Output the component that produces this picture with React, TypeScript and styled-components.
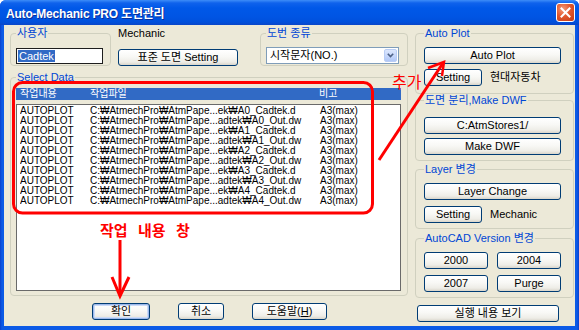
import React from "react";
import styled, { createGlobalStyle, css } from "styled-components";

const FONT = `"Liberation Sans", "Noto Sans CJK KR", Arial, sans-serif`;

const GlobalStyle = createGlobalStyle`
  html, body { margin: 0; padding: 0; background: #ffffff; }
  body { font-family: ${FONT}; }
  *, *::before, *::after { box-sizing: border-box; }
`;

const Window = styled.div`
  position: relative;
  width: 579px;
  height: 330px;
  display: flex;
  flex-direction: column;
  background: linear-gradient(90deg, #0A3FCC 0px, #0B5AE6 2px, #0B5AE6 calc(100% - 2px), #0A3FCC 100%);
  border-radius: 6px 6px 0 0;
  overflow: hidden;
  font-family: ${FONT};
`;

const TitleBar = styled.div`
  height: 25px;
  flex: none;
  display: flex;
  align-items: center;
  justify-content: space-between;
  padding: 0 4px 0 6px;
  background: linear-gradient(
    180deg,
    #3D8DF8 0px,
    #0F62EC 3px,
    #0058E8 8px,
    #0055E4 16px,
    #0050DC 22px,
    #0A46C8 25px
  );
`;

const Title = styled.span`
  color: #ffffff;
  font-weight: bold;
  font-size: 12px;
  letter-spacing: -0.2px;
  text-shadow: 1px 1px 0 #0A2E9A;
  white-space: nowrap;
`;

const CloseButton = styled.div`
  width: 19px;
  height: 19px;
  border: 1px solid #ffffff;
  border-radius: 3px;
  background: radial-gradient(circle at 35% 30%, #F29A7A 0%, #E2582E 45%, #C43A12 100%);
  display: flex;
  align-items: center;
  justify-content: center;
`;

const Client = styled.div`
  flex: 1;
  margin: 0 4px 4px 4px;
  background: #ECE9D8;
  display: grid;
  grid-template-columns: 398px 159px;
  column-gap: 7px;
  padding: 2px 1px 0 6px;
`;

const Column = styled.div`
  display: flex;
  flex-direction: column;
  min-width: 0;
`;

const TopRow = styled.div`
  display: flex;
  height: 39px;
`;

const Group = styled.fieldset<{
  $w?: number;
  $h: number;
  $pt: number;
  $pl: number;
  $pr?: number;
  $mt?: number;
}>`
  margin: ${(p) => p.$mt ?? 0}px 0 0 0;
  width: ${(p) => (p.$w ? `${p.$w}px` : "auto")};
  height: ${(p) => p.$h}px;
  min-width: 0;
  padding: ${(p) => p.$pt}px ${(p) => p.$pr ?? 0}px 0 ${(p) => p.$pl}px;
  border: 1px solid #D0D0BF;
  border-radius: 4px;
  flex: none;
`;

const Legend = styled.legend`
  padding: 0 1px;
  font-size: 11px;
  line-height: 12px;
  color: #0046D5;
  white-space: nowrap;
`;

const TextBox = styled.div`
  width: 87px;
  height: 16px;
  border: 1px solid #1E1E1E;
  background: #ffffff;
  padding: 0 1px;
  display: flex;
  align-items: center;
`;

const SelectedText = styled.span`
  background: #316AC5;
  color: #ffffff;
  font-size: 11px;
  line-height: 12px;
  padding: 0 1px;
`;

const MechBlock = styled.div`
  width: 120px;
  margin: 0 22px 0 7px;
  display: flex;
  flex-direction: column;
  gap: 9px;
  flex: none;
`;

const PlainLabel = styled.span`
  font-size: 11px;
  line-height: 13px;
  color: #000000;
  white-space: nowrap;
`;

const Btn = styled.button<{ $w?: number; $default?: boolean }>`
  width: ${(p) => (p.$w ? `${p.$w}px` : "100%")};
  height: 17px;
  flex: none;
  padding: 0;
  margin: 0;
  border: 1px solid #003C74;
  border-radius: 3px;
  background: linear-gradient(180deg, #FFFFFF 0%, #F8F8F5 45%, #EEEDE7 80%, #D9D5CA 100%);
  font-family: ${FONT};
  font-size: 11px;
  line-height: 15px;
  color: #000000;
  white-space: nowrap;
  ${(p) =>
    p.$default &&
    css`
      box-shadow: inset 0 0 0 1px #9DB9EB, inset 0 0 0 2px #CBDBF7;
    `}
`;

const SelectBox = styled.div`
  width: 133px;
  height: 17px;
  border: 1px solid #7F9DB9;
  background: #ffffff;
  display: flex;
  align-items: center;
  justify-content: space-between;
  padding: 0 1px 0 3px;
  font-size: 11px;
  line-height: 13px;
`;

const DropButton = styled.span`
  width: 13px;
  height: 13px;
  border-radius: 2px;
  border: 1px solid #B9CDF5;
  background: linear-gradient(180deg, #DCE7FD 0%, #C3D5FB 60%, #B0C7F6 100%);
  display: flex;
  align-items: center;
  justify-content: center;
`;

const HeaderBar = styled.div`
  height: 12px;
  background: #316AC5;
  color: #ffffff;
  display: grid;
  grid-template-columns: 70px 229px auto;
  padding-left: 4px;
  font-size: 10px;
  line-height: 12px;
  white-space: nowrap;
`;

const DataBox = styled.div`
  margin-top: 4px;
  height: 187px;
  border: 1px solid #6A6A6A;
  background: #ffffff;
  padding: 1px 0 0 3px;
`;

const DataRow = styled.div`
  display: grid;
  grid-template-columns: 70px 230px auto;
  height: 10px;
  font-size: 10px;
  line-height: 10px;
  color: #000000;
  white-space: nowrap;
  overflow: hidden;
`;

const BottomRow = styled.div`
  margin-top: 7px;
  display: flex;
  gap: 28px;
  padding-left: 82px;
`;

const StackRows = styled.div<{ $gap: number }>`
  display: flex;
  flex-direction: column;
  gap: ${(p) => p.$gap}px;
`;

const InlineRow = styled.div`
  display: flex;
  align-items: center;
  gap: 8px;
`;

const PairGrid = styled.div`
  display: grid;
  grid-template-columns: 64px 64px;
  column-gap: 9px;
  row-gap: 6px;
`;

const WideButtonSlot = styled.div`
  margin-top: 5px;
  padding-left: 2px;
`;

const Annotation = styled.svg`
  position: absolute;
  left: 0;
  top: 0;
  width: 579px;
  height: 330px;
  pointer-events: none;
`;

const NoteText = styled.span<{ $x: number; $y: number; $size: number; $bold?: boolean }>`
  position: absolute;
  left: ${(p) => p.$x}px;
  top: ${(p) => p.$y}px;
  color: #FF0000;
  font-family: "Noto Sans CJK KR", sans-serif;
  font-size: ${(p) => p.$size}px;
  font-weight: ${(p) => (p.$bold ? 700 : 400)};
  line-height: 1;
  word-spacing: 7px;
  white-space: nowrap;
  pointer-events: none;
`;

const Underline = styled.span`
  text-decoration: underline;
`;

const rows = [0, 1, 2, 3, 4].flatMap((n) => [
  `C:₩AtmechPro₩AtmPape...ek₩A${n}_Cadtek.d`,
  `C:₩AtmechPro₩AtmPape...adtek₩A${n}_Out.dw`,
]);

export default function App() {
  return (
    <>
      <GlobalStyle />
      <Window>
        <TitleBar>
          <Title>Auto-Mechanic PRO 도면관리</Title>
          <CloseButton>
            <svg width="11" height="11" viewBox="0 0 11 11">
              <path d="M1.5 1.5 L9.5 9.5 M9.5 1.5 L1.5 9.5" stroke="#ffffff" strokeWidth="2" strokeLinecap="square" />
            </svg>
          </CloseButton>
        </TitleBar>
        <Client>
          <Column>
            <TopRow>
              <Group $w={101} $h={39} $pt={9} $pl={5}>
                <Legend>사용자</Legend>
                <TextBox>
                  <SelectedText>Cadtek</SelectedText>
                </TextBox>
              </Group>
              <MechBlock>
                <PlainLabel>Mechanic</PlainLabel>
                <Btn>표준 도면 Setting</Btn>
              </MechBlock>
              <Group $w={148} $h={39} $pt={8} $pl={5}>
                <Legend>도번 종류</Legend>
                <SelectBox>
                  <span>시작문자(NO.)</span>
                  <DropButton>
                    <svg width="7" height="5" viewBox="0 0 7 5">
                      <path d="M0.8 0.8 L3.5 3.6 L6.2 0.8" stroke="#4D6185" strokeWidth="1.6" fill="none" />
                    </svg>
                  </DropButton>
                </SelectBox>
              </Group>
            </TopRow>
            <Group $h={225} $pt={5} $pl={5} $pr={6} $mt={5}>
              <Legend>Select Data</Legend>
              <HeaderBar>
                <span>작업내용</span>
                <span>작업파일</span>
                <span>비고</span>
              </HeaderBar>
              <DataBox>
                {rows.map((r, i) => (
                  <DataRow key={i}>
                    <span>AUTOPLOT</span>
                    <span>{r}</span>
                    <span>A3(max)</span>
                  </DataRow>
                ))}
              </DataBox>
            </Group>
            <BottomRow>
              <Btn $w={58} $default>확인</Btn>
              <Btn $w={46}>취소</Btn>
              <Btn $w={75}>
                도움말(<Underline>H</Underline>)
              </Btn>
            </BottomRow>
          </Column>
          <Column>
            <Group $h={67} $pt={8} $pl={8} $pr={12}>
              <Legend>Auto Plot</Legend>
              <StackRows $gap={5}>
                <Btn>Auto Plot</Btn>
                <InlineRow>
                  <Btn $w={58}>Setting</Btn>
                  <PlainLabel>현대자동차</PlainLabel>
                </InlineRow>
              </StackRows>
            </Group>
            <Group $h={67} $pt={11} $pl={8} $pr={12}>
              <Legend>도면 분리,Make DWF</Legend>
              <StackRows $gap={4}>
                <Btn>C:AtmStores1/</Btn>
                <Btn>Make DWF</Btn>
              </StackRows>
            </Group>
            <Group $h={66} $pt={8} $pl={8} $pr={12} $mt={2}>
              <Legend>Layer 변경</Legend>
              <StackRows $gap={6}>
                <Btn>Layer Change</Btn>
                <InlineRow>
                  <Btn $w={58}>Setting</Btn>
                  <PlainLabel>Mechanic</PlainLabel>
                </InlineRow>
              </StackRows>
            </Group>
            <Group $h={66} $pt={8} $pl={8} $pr={12} $mt={3}>
              <Legend>AutoCAD Version 변경</Legend>
              <PairGrid>
                <Btn>2000</Btn>
                <Btn>2004</Btn>
                <Btn>2007</Btn>
                <Btn>Purge</Btn>
              </PairGrid>
            </Group>
            <WideButtonSlot>
              <Btn $w={142}>실행 내용 보기</Btn>
            </WideButtonSlot>
          </Column>
        </Client>

        <NoteText $x={100} $y={222} $size={15} $bold>
          작업 내용 창
        </NoteText>
        <NoteText $x={392} $y={73} $size={16}>
          추가
        </NoteText>
        <Annotation viewBox="0 0 579 330">
          <rect x="13.5" y="82.5" width="359" height="130.5" rx="9" ry="9" fill="none" stroke="#FF0000" strokeWidth="3" />
          <line x1="120" y1="240" x2="120" y2="295" stroke="#FF0000" strokeWidth="3" />
          <polyline points="112,277 120,296 129,277" fill="none" stroke="#FF0000" strokeWidth="3" strokeLinejoin="miter" />
          <line x1="379" y1="160" x2="443" y2="63" stroke="#FF0000" strokeWidth="3" />
          <polyline points="428,68 444,62 442,76" fill="none" stroke="#FF0000" strokeWidth="2.5" />
        </Annotation>
      </Window>
    </>
  );
}
